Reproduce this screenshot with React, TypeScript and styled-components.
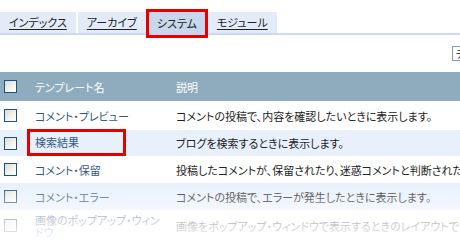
import React from "react";
import styled, { createGlobalStyle } from "styled-components";

const GlobalStyle = createGlobalStyle`
  html, body { margin: 0; padding: 0; background: #fff; }
  body {
    font-family: "Noto Sans CJK JP", "Noto Sans", sans-serif;
    font-size: 11px;
    font-feature-settings: "palt";
  }
`;

const Page = styled.div`
  position: relative;
  width: 460px;
  height: 240px;
  overflow: hidden;
`;

const TabStrip = styled.div`
  margin-top: 12px;
  border-bottom: 2px solid #cddbee;
  height: 21px;
`;

const TabRow = styled.div`
  display: flex;
  gap: 2px;
  align-items: flex-start;
`;

const Tab = styled.a<{ $active?: boolean }>`
  display: flex;
  align-items: center;
  height: ${(p) => (p.$active ? "23px" : "21px")};
  padding: 0 ${(p) => (p.$active ? "8px" : "9px")};
  background: ${(p) => (p.$active ? "#c7d7ec" : "#e3ebf8")};
  color: #222;
  text-decoration: ${(p) => (p.$active ? "none" : "underline")};
  text-underline-offset: 2px;
  outline: ${(p) => (p.$active ? "3px solid #e60000" : "none")};
  margin-left: ${(p) => (p.$active ? "1px" : "0")};
  margin-right: ${(p) => (p.$active ? "1px" : "0")};
  line-height: 1;
  white-space: nowrap;
  position: relative;
  z-index: ${(p) => (p.$active ? 1 : 0)};
`;

const Toolbar = styled.div`
  display: flex;
  height: 37px;
  padding: 11px 0 0 452px;
  box-sizing: border-box;
  overflow: hidden;
`;

const ToolButton = styled.div`
  height: 15px;
  padding: 0 3px;
  border: 1px solid #7f9db9;
  box-sizing: border-box;
  display: flex;
  align-items: center;
  font-size: 10px;
  color: #111;
  white-space: nowrap;
  background: #fff;
`;

const Table = styled.div`
  display: flex;
  flex-direction: column;
`;

const Row = styled.div<{ $h: number; $alt?: boolean; $head?: boolean }>`
  display: flex;
  align-items: center;
  height: ${(p) => p.$h}px;
  background: ${(p) => (p.$head ? "#8eacbd" : p.$alt ? "#e8f0fc" : "#fff")};
  white-space: nowrap;
`;

const CheckCell = styled.div`
  width: 35px;
  flex: none;
  display: flex;
  padding-left: 4px;
  box-sizing: border-box;
`;

const Check = styled.span`
  display: block;
  width: 13px;
  height: 13px;
  box-sizing: border-box;
  border: 1px solid #1c5180;
  background: linear-gradient(135deg, #dcdcd5 0%, #f4f4f0 60%, #ffffff 100%);
`;

const NameCell = styled.div<{ $head?: boolean }>`
  width: 141px;
  flex: none;
  color: ${(p) => (p.$head ? "#fff" : "#34577f")};
  white-space: normal;
  line-height: 12px;
  padding-right: 8px;
  box-sizing: border-box;
`;

const NameLink = styled.span<{ $marked?: boolean }>`
  display: inline-flex;
  align-items: center;
  ${(p) =>
    p.$marked
      ? `
    position: relative;
    z-index: 1;
    outline: 3px solid #e60000;
    width: 93px;
    height: 21px;
    margin: -2px 0 0 -5px;
    padding-left: 5px;
    box-sizing: border-box;
  `
      : ""}
`;

const DescCell = styled.div<{ $head?: boolean }>`
  flex: 1;
  color: ${(p) => (p.$head ? "#fff" : "#222")};
  line-height: 12px;
`;

const Fade = styled.div`
  position: absolute;
  left: 0;
  right: 0;
  top: 183px;
  bottom: 0;
  background: linear-gradient(
    to bottom,
    rgba(255, 255, 255, 0) 0%,
    rgba(255, 255, 255, 0.3) 25%,
    rgba(255, 255, 255, 0.72) 70%,
    rgba(255, 255, 255, 0.95) 100%
  );
  pointer-events: none;
  z-index: 2;
`;

const tabs = [
  { label: "インデックス" },
  { label: "アーカイブ" },
  { label: "システム", active: true },
  { label: "モジュール" },
];

const rows = [
  { name: "コメント・プレビュー", desc: "コメントの投稿で、内容を確認したいときに表示します。", h: 29 },
  { name: "検索結果", desc: "ブログを検索するときに表示します。", h: 26, alt: true, marked: true },
  {
    name: "コメント・保留",
    desc: "投稿したコメントが、保留されたり、迷惑コメントと判断されたときに表示します。",
    h: 27,
  },
  { name: "コメント・エラー", desc: "コメントの投稿で、エラーが発生したときに表示します。", h: 27, alt: true },
  {
    name: "画像のポップアップ・ウィンドウ",
    desc: "画像をポップアップ・ウィンドウで表示するときのレイアウトです。",
    h: 31,
  },
];

export default function App() {
  return (
    <Page>
      <GlobalStyle />
      <TabStrip>
        <TabRow>
          {tabs.map((t) => (
            <Tab key={t.label} $active={t.active}>
              {t.label}
            </Tab>
          ))}
        </TabRow>
      </TabStrip>
      <Toolbar>
        <ToolButton>テンプレートを作成</ToolButton>
      </Toolbar>
      <Table>
        <Row $h={29} $head>
          <CheckCell>
            <Check />
          </CheckCell>
          <NameCell $head>テンプレート名</NameCell>
          <DescCell $head>説明</DescCell>
        </Row>
        {rows.map((r) => (
          <Row key={r.name} $h={r.h} $alt={r.alt}>
            <CheckCell>
              <Check />
            </CheckCell>
            <NameCell>
              <NameLink $marked={r.marked}>{r.name}</NameLink>
            </NameCell>
            <DescCell>{r.desc}</DescCell>
          </Row>
        ))}
      </Table>
      <Fade />
    </Page>
  );
}
